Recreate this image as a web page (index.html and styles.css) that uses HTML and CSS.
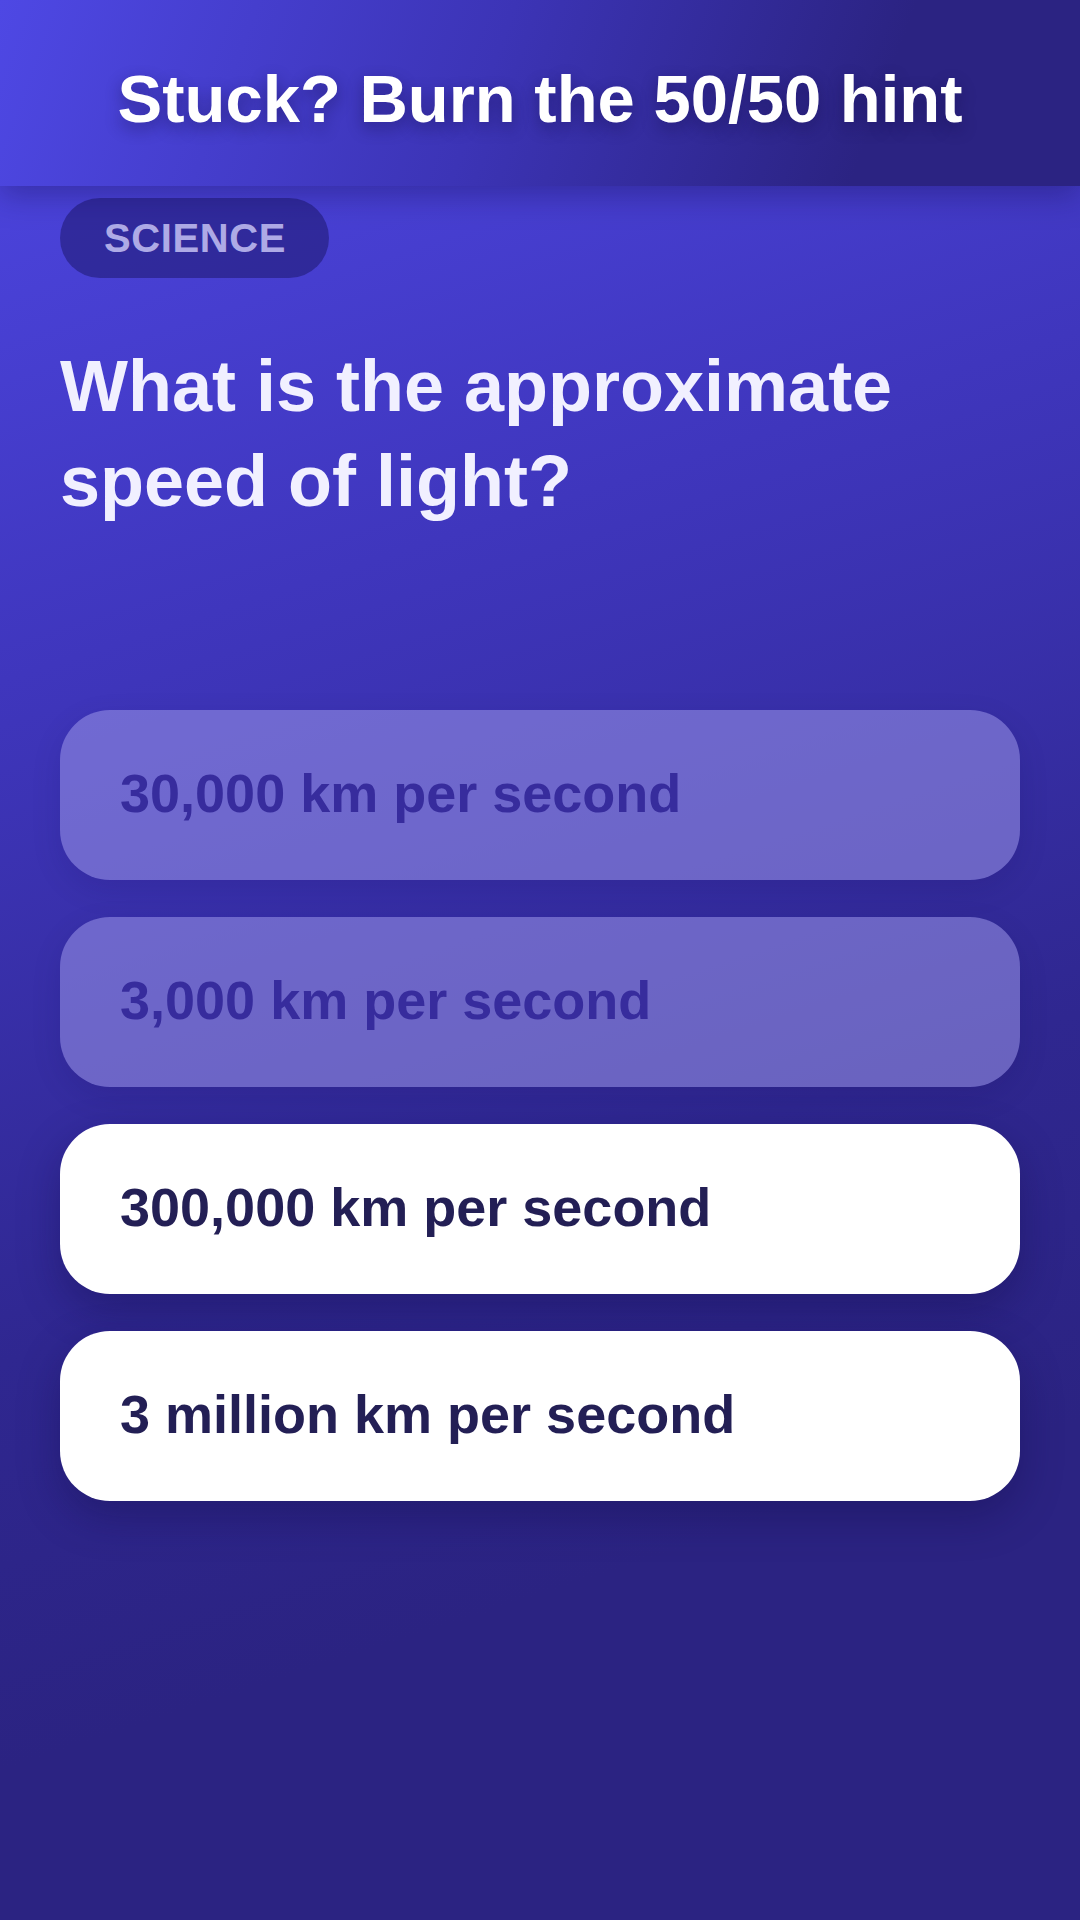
FILE: index.html
```html
<!DOCTYPE html>
<html lang="en">
<head>
    <meta charset="UTF-8">
    <meta name="viewport" content="width=device-width, initial-scale=1.0">
    <title>Quiz - 50/50 Hint</title>
    <link rel="stylesheet" href="styles.css">
</head>
<body>
    <div class="screen">
        <div class="hint-bar">
            <h1>Stuck? Burn the 50/50 hint</h1>
        </div>

        <div class="quiz">
            <span class="category">SCIENCE</span>

            <h2 class="question">What is the approximate speed of light?</h2>

            <div class="answers">
                <div class="answer removed">30,000 km per second</div>
                <div class="answer removed">3,000 km per second</div>
                <div class="answer">300,000 km per second</div>
                <div class="answer">3 million km per second</div>
            </div>
        </div>
    </div>
</body>
</html>
```

FILE: styles.css
```css
html, body {
    margin: 0;
    padding: 0;
}
body {
    font-family: "Liberation Sans", Arial, sans-serif;
    background: #2b2382;
}
.screen {
    width: 1080px;
    height: 1920px;
    overflow: hidden;
    background: linear-gradient(162deg, #4f48e6 0%, #3f36bd 30%, #2f2790 60%, #2b2382 78%);
}
.hint-bar {
    height: 186px;
    display: flex;
    align-items: center;
    justify-content: center;
    background: linear-gradient(110deg, #4e48e4 0%, #3c34b6 45%, #2b2382 80%);
    box-shadow: 0 10px 28px rgba(20, 14, 80, 0.35);
    position: relative;
    z-index: 1;
}
.hint-bar h1 {
    margin: 0;
    padding-top: 10px;
    color: #ffffff;
    font-size: 67px;
    font-weight: 700;
    text-shadow: 0 6px 16px rgba(20, 14, 70, 0.45);
}
.quiz {
    padding: 12px 60px 0;
}
.category {
    display: inline-block;
    height: 80px;
    line-height: 80px;
    padding: 0 43px 0 44px;
    border-radius: 40px;
    background: rgba(30, 24, 110, 0.55);
    color: #aeaae6;
    font-size: 40px;
    font-weight: 700;
    letter-spacing: 0.6px;
}
.question {
    margin: 61px 0 0;
    color: #f1f0ff;
    font-size: 72px;
    font-weight: 700;
    line-height: 95px;
    width: 900px;
}
.answers {
    margin-top: 181px;
    display: flex;
    flex-direction: column;
    gap: 37px;
}
.answer {
    height: 170px;
    display: flex;
    align-items: center;
    padding: 0 60px 5px;
    box-sizing: border-box;
    border-radius: 50px;
    background: #ffffff;
    color: #231f55;
    font-size: 54px;
    font-weight: 700;
    box-shadow: 0 16px 40px rgba(18, 12, 70, 0.35);
}
.answer.removed {
    background: rgba(155, 150, 232, 0.55);
    color: #372c9d;
    box-shadow: 0 10px 30px rgba(18, 12, 70, 0.12);
    padding-bottom: 4px;
}
```
